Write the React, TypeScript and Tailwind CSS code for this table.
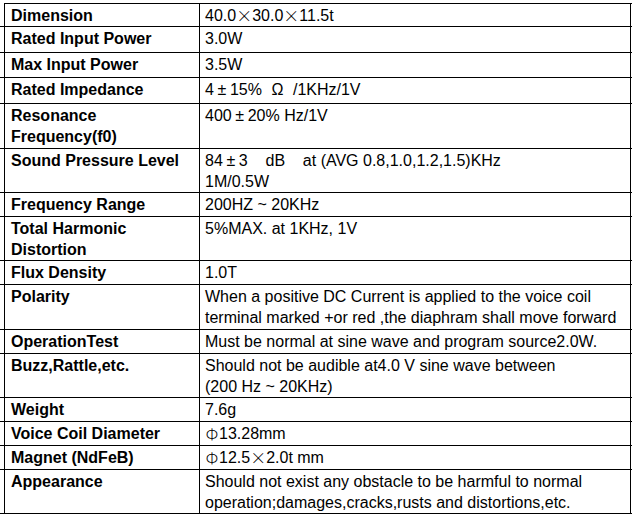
import React from "react";

const X = () => (
  <span className="inline-block w-[16px] text-center text-[16px] leading-[21px] font-['Noto_Sans_CJK_SC',sans-serif] font-light align-top">×</span>
);
const PM = () => <span className="inline-block w-[16px] text-center">±</span>;
const PHI = () => (
  <span className="inline-block w-[14px] text-center text-[16px] leading-[21px] font-['Noto_Sans_CJK_SC',sans-serif] font-light align-top">Φ</span>
);

type Row = { label: React.ReactNode; value: React.ReactNode; h: string };

const rows: Row[] = [
  {
    label: "Dimension",
    value: (
      <>
        40.0<X />30.0<X />11.5t
      </>
    ),
    h: "h-[23px]",
  },
  { label: "Rated Input Power", value: "3.0W", h: "h-[26px]" },
  { label: "Max Input Power", value: "3.5W", h: "h-[25px]" },
  {
    label: "Rated Impedance",
    value: (
      <>
        4<PM />15%<span className="inline-block w-[31px] text-center">Ω</span>/1KHz/1V
      </>
    ),
    h: "h-[26px]",
  },
  {
    label: (
      <>
        Resonance
        <br />
        Frequency(f0)
      </>
    ),
    value: (
      <>
        400<PM />20% Hz/1V
      </>
    ),
    h: "h-[45px]",
  },
  {
    label: "Sound Pressure Level",
    value: (
      <>
        <span className="whitespace-pre">
          84<PM />3{"    "}dB{"    "}at (AVG 0.8,1.0,1.2,1.5)KHz
        </span>
        <br />
        1M/0.5W
      </>
    ),
    h: "h-[44px]",
  },
  { label: "Frequency Range", value: "200HZ ~ 20KHz", h: "h-[24px]" },
  {
    label: (
      <>
        Total Harmonic
        <br />
        Distortion
      </>
    ),
    value: "5%MAX. at 1KHz, 1V",
    h: "h-[44px]",
  },
  { label: "Flux Density", value: "1.0T", h: "h-[24px]" },
  {
    label: "Polarity",
    value: (
      <>
        When a positive DC Current is applied to the voice coil
        <br />
        terminal marked +or red ,the diaphram shall move forward
      </>
    ),
    h: "h-[45px]",
  },
  {
    label: "OperationTest",
    value: "Must be normal at sine wave and program source2.0W.",
    h: "h-[24px]",
  },
  {
    label: "Buzz,Rattle,etc.",
    value: (
      <>
        Should not be audible at4.0 V sine wave between
        <br />
        (200 Hz ~ 20KHz)
      </>
    ),
    h: "h-[44px]",
  },
  { label: "Weight", value: "7.6g", h: "h-[24px]" },
  {
    label: "Voice Coil Diameter",
    value: (
      <>
        <PHI />13.28mm
      </>
    ),
    h: "h-[24px]",
  },
  {
    label: "Magnet (NdFeB)",
    value: (
      <>
        <PHI />12.5<X />2.0t mm
      </>
    ),
    h: "h-[24px]",
  },
  {
    label: "Appearance",
    value: (
      <>
        Should not exist any obstacle to be harmful to normal
        <br />
        operation;damages,cracks,rusts and distortions,etc.
      </>
    ),
    h: "h-[44px]",
  },
];

export default function App() {
  return (
    <div className="w-[637px] h-[519px] bg-white overflow-hidden pt-[3px] font-['Liberation_Sans',Arial,sans-serif] text-[16px] leading-[21px] text-black">
      <div className="ml-[4px] w-[628px] border-t border-black" />
      {rows.map((r, i) => (
        <div
          key={i}
          className={`flex w-[632px] border-b border-black ${r.h} ${
            i === rows.length - 1 ? "pl-[4px]" : ""
          }`}
        >
          {i !== rows.length - 1 && <div className="w-[4px] shrink-0" />}
          <div className="w-[195px] shrink-0 border-l border-black pl-[6px] pt-[1px] font-bold">
            {r.label}
          </div>
          <div className="w-[432px] shrink-0 border-l border-r border-black pl-[5px] pt-[1px] whitespace-nowrap">
            {r.value}
          </div>
        </div>
      ))}
    </div>
  );
}
